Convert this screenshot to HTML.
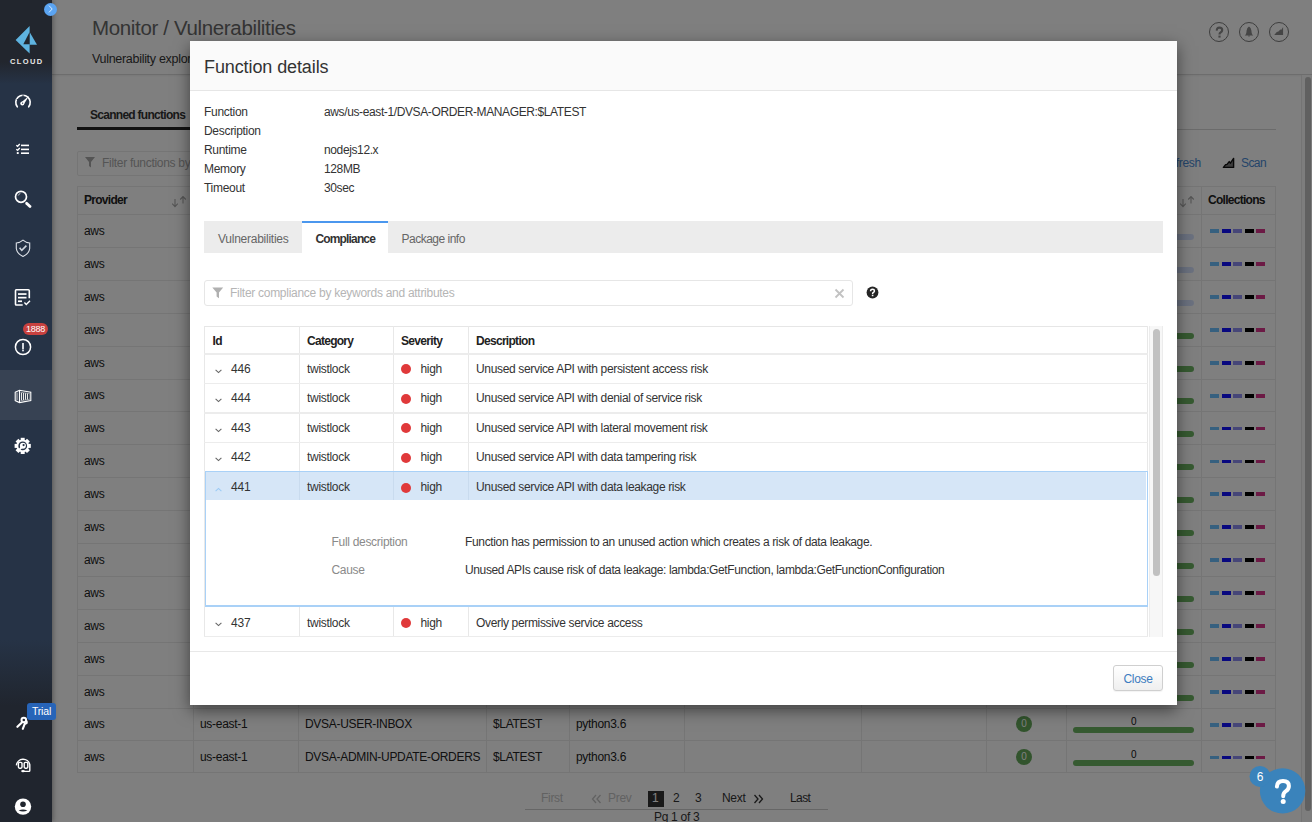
<!DOCTYPE html>
<html><head><meta charset="utf-8">
<style>
*{box-sizing:border-box}
html,body{margin:0;padding:0}
body{width:1312px;height:822px;overflow:hidden;position:relative;background:#fff;font-family:"Liberation Sans",sans-serif;color:#333;font-size:12px;letter-spacing:-0.3px}
.abs{position:absolute}
#sb{position:absolute;left:0;top:0;width:52px;height:822px;background:linear-gradient(180deg,#22262e 0px,#22262e 62px,#263346 84px,#263346 640px,#20252e 706px,#20252e 822px);z-index:5;box-shadow:1px 0 5px rgba(0,0,0,.35)}
.ic{position:absolute;left:14px;width:18px;height:18px}
#main{position:absolute;left:0;top:0;width:1312px;height:822px;background:#fff}
#ov{position:absolute;left:0;top:0;width:1312px;height:822px;background:rgba(0,0,0,.5);z-index:3}
#modal{position:absolute;left:190px;top:41px;width:986.5px;height:664px;background:#fff;z-index:10;box-shadow:0 5px 15px rgba(0,0,0,.5)}
.b{font-weight:bold;letter-spacing:-0.72px}
</style></head><body>
<div id="sb">
 <!-- expand button -->
 <div class="abs" style="left:44px;top:3px;width:13px;height:13px;border-radius:50%;background:#5ba4f2"></div>
 <svg class="abs" style="left:48px;top:5px" width="6" height="9" viewBox="0 0 6 9"><path d="M1 0.6 L4.2 4 L1 7.4" fill="none" stroke="#d6ecff" stroke-width="1"/></svg>
 <!-- logo -->
 <svg class="abs" style="left:14px;top:25px" width="26" height="30" viewBox="0 0 26 30">
  <path d="M15.6 1 L1.6 15 L15.6 28.5 Z" fill="#5eb3e0"/>
  <path d="M15.6 7 L23 19.8 L15.6 19.8 Z" fill="#5eb3e0"/>
  <path d="M15.6 7 L9.3 19.3 L15.6 19.3 Z" fill="#22262e"/>
 </svg>

 <!-- gauge -->
 <svg class="abs" style="left:10px;top:88px" width="26" height="26" viewBox="0 0 26 26">
  <path d="M7.3 18.8 A7.2 7.2 0 1 1 18.7 18.8" fill="none" stroke="#fff" stroke-width="1.6" stroke-linecap="round"/>
  <path d="M10.8 14.8 L18.9 8 L13.6 16.8 Z" fill="#fff"/>
  <circle cx="12.3" cy="15.6" r="2" fill="#fff"/><circle cx="12.6" cy="15.2" r="0.6" fill="#253245"/>
  <path d="M13 6.4 L13 8.2" stroke="#253245" stroke-width="0.9"/><path d="M6.6 11.2 L8.2 11.8" stroke="#253245" stroke-width="0.9"/>
 </svg>
 <!-- list -->
 <svg class="abs" style="left:10px;top:136px" width="26" height="26" viewBox="0 0 26 26">
  <path d="M6.3 9.3 L7.6 10.3 L9.8 8" fill="none" stroke="#fff" stroke-width="1.3"/>
  <path d="M6.3 13.3 L7.6 14.3 L9.8 12" fill="none" stroke="#fff" stroke-width="1.3"/>
  <rect x="6.8" y="16.1" width="1.9" height="1.9" fill="#fff"/>
  <rect x="11" y="8.6" width="8" height="1.6" fill="#fff"/>
  <rect x="11" y="12.6" width="8" height="1.6" fill="#fff"/>
  <rect x="11" y="16.4" width="8" height="1.6" fill="#fff"/>
 </svg>
 <!-- search -->
 <svg class="abs" style="left:10px;top:186px" width="26" height="26" viewBox="0 0 26 26">
  <circle cx="11" cy="10.8" r="5.5" fill="none" stroke="#fff" stroke-width="1.7"/>
  <path d="M16.6 17.2 L20 20.6" stroke="#fff" stroke-width="2.8" stroke-linecap="round"/>
  <path d="M8.2 9.6 A3.2 3.2 0 0 1 10.4 7.4" fill="none" stroke="#ddd" stroke-width="0.8"/>
 </svg>
 <!-- shield -->
 <svg class="abs" style="left:10px;top:235px" width="26" height="26" viewBox="0 0 26 26">
  <path d="M13 5.2 Q10 7.8 6.3 8 L6.3 13.5 Q7 18.6 13 21.4 Q19 18.6 19.7 13.5 L19.7 8 Q16 7.8 13 5.2 Z" fill="none" stroke="#e0e4ea" stroke-width="1.1"/>
  <path d="M9.6 12.8 L11.8 15.4 L16.4 10.6" fill="none" stroke="#d0d6de" stroke-width="1.6"/>
 </svg>
 <!-- document -->
 <svg class="abs" style="left:10px;top:284px" width="26" height="26" viewBox="0 0 26 26">
  <path d="M19.3 14.2 L19.3 6.8 Q19.3 5.8 18.3 5.8 L6.3 5.8 Q5.5 5.8 5.5 6.8 L5.5 20.2 Q5.5 21 6.3 21 L12.7 21" fill="none" stroke="#fff" stroke-width="1.6"/>
  <rect x="8" y="9.2" width="8.5" height="1.7" fill="#fff"/>
  <rect x="8" y="12.8" width="8.5" height="1.7" fill="#fff"/>
  <rect x="8" y="16.4" width="4" height="1.7" fill="#fff"/>
  <path d="M14.4 18.6 L16.3 20.6 L20 16.8" fill="none" stroke="#fff" stroke-width="1.4"/>
 </svg>
 <!-- badge 1888 -->
 <div class="abs" style="left:23px;top:323px;width:25px;height:12px;border-radius:6px;background:#c8413f;color:#fff;font-size:9px;line-height:12px;text-align:center;letter-spacing:-0.2px">1888</div>
 <!-- alert -->
 <svg class="abs" style="left:10px;top:334px" width="26" height="26" viewBox="0 0 26 26">
  <circle cx="13" cy="13" r="7.6" fill="none" stroke="#fff" stroke-width="1.5"/>
  <rect x="12.1" y="9" width="1.8" height="6.2" fill="#e6e9ee"/>
  <rect x="12.1" y="15.6" width="1.8" height="1.7" fill="#e6e9ee"/>
 </svg>
 <!-- active -->
 <div class="abs" style="left:0;top:370px;width:52px;height:50px;background:#374253"></div>
 <svg class="abs" style="left:10px;top:383px" width="26" height="26" viewBox="0 0 26 26">
  <path d="M5.2 9.3 L9.5 7.2 L20.8 9.3 L20.8 17.6 L9.5 19.6 L5.2 17.6 Z" fill="none" stroke="#fff" stroke-width="1.1"/>
  <path d="M9.5 7.2 L9.5 19.6" stroke="#fff" stroke-width="1.1"/>
  <path d="M7 9.6 L7 17" stroke="#ddd" stroke-width="0.9"/>
  <path d="M11.5 9.8 L11.5 17.2 M13.5 10 L13.5 17 M15.5 10.2 L15.5 16.8 M17.5 10.4 L17.5 16.6" stroke="#e8e8e8" stroke-width="1"/>
  <path d="M10.5 9.2 L20 10.8 L20 16.2 L10.5 17.8" fill="none" stroke="#ccc" stroke-width="0.6"/>
 </svg>
 <!-- gear -->
 <svg class="abs" style="left:10px;top:433px" width="26" height="26" viewBox="0 0 26 26">
  <g transform="translate(12.7 12.9)" fill="#fff">
   <circle r="6.3"/><rect x="-2" y="-8.1" width="4" height="3.4" transform="rotate(0)"/><rect x="-2" y="-8.1" width="4" height="3.4" transform="rotate(45)"/><rect x="-2" y="-8.1" width="4" height="3.4" transform="rotate(90)"/><rect x="-2" y="-8.1" width="4" height="3.4" transform="rotate(135)"/><rect x="-2" y="-8.1" width="4" height="3.4" transform="rotate(180)"/><rect x="-2" y="-8.1" width="4" height="3.4" transform="rotate(225)"/><rect x="-2" y="-8.1" width="4" height="3.4" transform="rotate(270)"/><rect x="-2" y="-8.1" width="4" height="3.4" transform="rotate(315)"/>
  </g>
  <circle cx="12.7" cy="12.9" r="4.4" fill="#253245"/>
  <circle cx="12.9" cy="12.7" r="3" fill="#fff"/>
  <circle cx="13.6" cy="12.1" r="1.1" fill="#253245"/>
  <path d="M12.2 13.6 L9.4 16.6" stroke="#fff" stroke-width="2"/>
 </svg>
 <!-- keys -->
 <svg class="abs" style="left:10px;top:710px" width="26" height="26" viewBox="0 0 26 26">
  <circle cx="13.8" cy="10" r="2.3" fill="none" stroke="#fff" stroke-width="2"/>
  <path d="M15.6 10.2 A2.6 2.6 0 0 1 16.6 13.4 L14.8 14" fill="none" stroke="#fff" stroke-width="1.8"/>
  <path d="M12.4 12 L7.4 16.8" stroke="#fff" stroke-width="2.2" stroke-linecap="round"/>
  <path d="M14.8 13.6 L12.8 18.8" stroke="#fff" stroke-width="2.1" stroke-linecap="round"/>
 </svg>
 <div class="abs" style="left:27px;top:703px;width:29px;height:17px;border-radius:3px;background:#2764b8;color:#fff;font-size:10.5px;line-height:17px;text-align:center;letter-spacing:-0.2px">Trial</div>
 <!-- headset -->
 <svg class="abs" style="left:10px;top:752px" width="26" height="26" viewBox="0 0 26 26">
  <path d="M6.4 13.4 A6.8 6.8 0 0 1 19.8 12.6 L19.8 18.6 Q19.8 19.4 19 19.4 L13 19.4" fill="none" stroke="#fff" stroke-width="1.4"/>
  <rect x="8.4" y="10.4" width="3.6" height="5.8" rx="1.1" fill="none" stroke="#fff" stroke-width="1.4"/>
  <rect x="14.2" y="10.4" width="3.6" height="5.8" rx="1.1" fill="none" stroke="#fff" stroke-width="1.4"/>
  <ellipse cx="13" cy="19.1" rx="1.8" ry="1.2" fill="#fff"/>
 </svg>
 <!-- user -->
 <svg class="abs" style="left:10px;top:794px" width="26" height="26" viewBox="0 0 26 26">
  <circle cx="13" cy="12.6" r="8.2" fill="#fff"/>
  <circle cx="13" cy="10.2" r="2.8" fill="#20252e"/>
  <path d="M8.6 16.4 Q13 14.4 17.4 16.4 Q13 18.4 8.6 16.4 Z" fill="#20252e"/>
 </svg>
 <div class="abs" style="left:10px;top:57px;width:34px;font-size:7.5px;font-weight:bold;color:#e8e8e8;letter-spacing:1.4px;line-height:9px">CLOUD</div>
</div>
<!--MAIN-->
<div id="main">
<div class="abs" style="left:52px;top:0;width:1260px;height:75px;border-bottom:1px solid #dadada;box-shadow:0 1px 2px rgba(0,0,0,.06)"></div>
<div class="abs" id="title" style="left:92px;top:14.5px;font-size:20.5px;line-height:26px;color:#686868;letter-spacing:-0.35px;white-space:nowrap">Monitor / Vulnerabilities</div>
<div class="abs" id="subtitle" style="left:92px;top:51px;font-size:12.5px;line-height:16px;color:#333;white-space:nowrap">Vulnerability explorer</div>
<div class="abs" style="left:1209px;top:22px;width:20px;height:20px;border-radius:50%;border:1px solid #7a7a7a"></div>
<div class="abs" style="left:1239px;top:22px;width:20px;height:20px;border-radius:50%;border:1px solid #7a7a7a"></div>
<div class="abs" style="left:1268.5px;top:22px;width:20px;height:20px;border-radius:50%;border:1px solid #7a7a7a"></div>
<svg class="abs" style="left:1209px;top:22px" width="80" height="20" viewBox="0 0 80 20">
 <path d="M7.9 8.6 Q7.6 5.6 10.4 5.6 Q13.2 5.6 13.2 8 Q13.2 9.6 11.6 10.4 Q10.5 11 10.5 12.6" fill="none" stroke="#8a8a8a" stroke-width="2.2"/>
 <rect x="9.4" y="13.6" width="2.2" height="2" fill="#8a8a8a"/>
 <path d="M35.8 13.4 Q37.2 12.2 37.4 10.4 L37.6 8.6 Q38 5.4 40 4.6 Q42 5.4 42.4 8.6 L42.6 10.4 Q42.8 12.2 44.2 13.4 Z" fill="#8a8a8a"/>
 <path d="M39 13.6 L41 13.6 L40 15 Z" fill="#8a8a8a"/>
 <path d="M65.2 13 L67.8 10 L69.4 9.4 L71.4 7.4 L72.4 7.8 L74.1 5 L74.1 13 Z" fill="#8a8a8a"/>
</svg>
<div class="abs b" style="left:90px;top:107px;font-size:12px;line-height:16px;color:#333;white-space:nowrap">Scanned functions</div>
<div class="abs" style="left:77px;top:129px;width:1199px;height:1px;background:#d6d6d6"></div>
<div class="abs" style="left:77px;top:127px;width:130px;height:3px;background:#222"></div>
<div class="abs" style="left:77px;top:151px;width:740px;height:25px;border:1px solid #ebebeb;border-radius:2px"></div>
<svg class="abs" style="left:85px;top:157px" width="10" height="11" viewBox="0 0 10 11"><path d="M0 0 L10 0 L6 5 L6 10.5 L4 9 L4 5 Z" fill="#a8a8a8"/></svg>
<div class="abs" style="left:102px;top:155px;font-size:12px;line-height:16px;color:#aaa;white-space:nowrap">Filter functions by keywords and attributes</div>
<div class="abs" style="left:1161px;top:155px;font-size:12px;line-height:16px;color:#4a8ad4;white-space:nowrap">Refresh</div>
<svg class="abs" style="left:1222px;top:157px" width="13" height="12" viewBox="0 0 13 12"><path d="M1.4 10.4 L3.6 7.6 L5 7.4 L7.2 4.6 L8.4 6.2 L11.6 1.4 L11.6 10.4 Z" fill="#7a7a7a" stroke="#111" stroke-width="1.4" stroke-linejoin="round"/></svg>
<div class="abs" style="left:1241px;top:155px;font-size:12px;line-height:16px;color:#4a8ad4;white-space:nowrap;letter-spacing:-0.6px">Scan</div>
<div class="abs" style="left:77px;top:186px;width:1199px;height:587.3px;border:1px solid #ebebeb"></div>
<div class="abs" style="left:193px;top:186px;width:1px;height:587.3px;background:#ebebeb"></div>
<div class="abs" style="left:298px;top:186px;width:1px;height:587.3px;background:#ebebeb"></div>
<div class="abs" style="left:486px;top:186px;width:1px;height:587.3px;background:#ebebeb"></div>
<div class="abs" style="left:569px;top:186px;width:1px;height:587.3px;background:#ebebeb"></div>
<div class="abs" style="left:684px;top:186px;width:1px;height:587.3px;background:#ebebeb"></div>
<div class="abs" style="left:861px;top:186px;width:1px;height:587.3px;background:#ebebeb"></div>
<div class="abs" style="left:986px;top:186px;width:1px;height:587.3px;background:#ebebeb"></div>
<div class="abs" style="left:1066px;top:186px;width:1px;height:587.3px;background:#ebebeb"></div>
<div class="abs" style="left:1201px;top:186px;width:1px;height:587.3px;background:#ebebeb"></div>
<div class="abs" style="left:77px;top:214.00px;width:1199px;height:1px;background:#ebebeb"></div>
<div class="abs" style="left:77px;top:246.90px;width:1199px;height:1px;background:#ebebeb"></div>
<div class="abs" style="left:77px;top:279.80px;width:1199px;height:1px;background:#ebebeb"></div>
<div class="abs" style="left:77px;top:312.70px;width:1199px;height:1px;background:#ebebeb"></div>
<div class="abs" style="left:77px;top:345.60px;width:1199px;height:1px;background:#ebebeb"></div>
<div class="abs" style="left:77px;top:378.50px;width:1199px;height:1px;background:#ebebeb"></div>
<div class="abs" style="left:77px;top:411.40px;width:1199px;height:1px;background:#ebebeb"></div>
<div class="abs" style="left:77px;top:444.30px;width:1199px;height:1px;background:#ebebeb"></div>
<div class="abs" style="left:77px;top:477.20px;width:1199px;height:1px;background:#ebebeb"></div>
<div class="abs" style="left:77px;top:510.10px;width:1199px;height:1px;background:#ebebeb"></div>
<div class="abs" style="left:77px;top:543.00px;width:1199px;height:1px;background:#ebebeb"></div>
<div class="abs" style="left:77px;top:575.90px;width:1199px;height:1px;background:#ebebeb"></div>
<div class="abs" style="left:77px;top:608.80px;width:1199px;height:1px;background:#ebebeb"></div>
<div class="abs" style="left:77px;top:641.70px;width:1199px;height:1px;background:#ebebeb"></div>
<div class="abs" style="left:77px;top:674.60px;width:1199px;height:1px;background:#ebebeb"></div>
<div class="abs" style="left:77px;top:707.50px;width:1199px;height:1px;background:#ebebeb"></div>
<div class="abs" style="left:77px;top:740.40px;width:1199px;height:1px;background:#ebebeb"></div>
<div class="abs b hd" style="left:84px;top:192px;font-size:12px;line-height:16px;color:#222;white-space:nowrap">Provider</div>
<svg class="abs" style="left:171px;top:195.5px" width="16" height="12" viewBox="0 0 16 12"><path d="M4 3 L4 10.5 M1.2 7.6 L4 10.6 L6.8 7.6" fill="none" stroke="#aaa" stroke-width="1.1"/><path d="M12 0.6 L12 7.5 M9.2 3.5 L12 0.5 L14.8 3.5" fill="none" stroke="#aaa" stroke-width="1.1"/></svg>
<div class="abs b hd" style="left:200px;top:192px;font-size:12px;line-height:16px;color:#222;white-space:nowrap">Region</div>
<svg class="abs" style="left:276px;top:195.5px" width="16" height="12" viewBox="0 0 16 12"><path d="M4 3 L4 10.5 M1.2 7.6 L4 10.6 L6.8 7.6" fill="none" stroke="#aaa" stroke-width="1.1"/><path d="M12 0.6 L12 7.5 M9.2 3.5 L12 0.5 L14.8 3.5" fill="none" stroke="#aaa" stroke-width="1.1"/></svg>
<div class="abs b hd" style="left:305px;top:192px;font-size:12px;line-height:16px;color:#222;white-space:nowrap">Function name</div>
<svg class="abs" style="left:464px;top:195.5px" width="16" height="12" viewBox="0 0 16 12"><path d="M4 3 L4 10.5 M1.2 7.6 L4 10.6 L6.8 7.6" fill="none" stroke="#aaa" stroke-width="1.1"/><path d="M12 0.6 L12 7.5 M9.2 3.5 L12 0.5 L14.8 3.5" fill="none" stroke="#aaa" stroke-width="1.1"/></svg>
<div class="abs b hd" style="left:493px;top:192px;font-size:12px;line-height:16px;color:#222;white-space:nowrap">Version</div>
<svg class="abs" style="left:547px;top:195.5px" width="16" height="12" viewBox="0 0 16 12"><path d="M4 3 L4 10.5 M1.2 7.6 L4 10.6 L6.8 7.6" fill="none" stroke="#aaa" stroke-width="1.1"/><path d="M12 0.6 L12 7.5 M9.2 3.5 L12 0.5 L14.8 3.5" fill="none" stroke="#aaa" stroke-width="1.1"/></svg>
<div class="abs b hd" style="left:576px;top:192px;font-size:12px;line-height:16px;color:#222;white-space:nowrap">Runtime</div>
<svg class="abs" style="left:662px;top:195.5px" width="16" height="12" viewBox="0 0 16 12"><path d="M4 3 L4 10.5 M1.2 7.6 L4 10.6 L6.8 7.6" fill="none" stroke="#aaa" stroke-width="1.1"/><path d="M12 0.6 L12 7.5 M9.2 3.5 L12 0.5 L14.8 3.5" fill="none" stroke="#aaa" stroke-width="1.1"/></svg>
<div class="abs b hd" style="left:691px;top:192px;font-size:12px;line-height:16px;color:#222;white-space:nowrap">Description</div>
<svg class="abs" style="left:839px;top:195.5px" width="16" height="12" viewBox="0 0 16 12"><path d="M4 3 L4 10.5 M1.2 7.6 L4 10.6 L6.8 7.6" fill="none" stroke="#aaa" stroke-width="1.1"/><path d="M12 0.6 L12 7.5 M9.2 3.5 L12 0.5 L14.8 3.5" fill="none" stroke="#aaa" stroke-width="1.1"/></svg>
<div class="abs b hd" style="left:868px;top:192px;font-size:12px;line-height:16px;color:#222;white-space:nowrap">Last modified</div>
<svg class="abs" style="left:964px;top:195.5px" width="16" height="12" viewBox="0 0 16 12"><path d="M4 3 L4 10.5 M1.2 7.6 L4 10.6 L6.8 7.6" fill="none" stroke="#aaa" stroke-width="1.1"/><path d="M12 0.6 L12 7.5 M9.2 3.5 L12 0.5 L14.8 3.5" fill="none" stroke="#aaa" stroke-width="1.1"/></svg>
<div class="abs b hd" style="left:993px;top:192px;font-size:12px;line-height:16px;color:#222;white-space:nowrap">Vulnerabilities</div>
<svg class="abs" style="left:1044px;top:195.5px" width="16" height="12" viewBox="0 0 16 12"><path d="M4 3 L4 10.5 M1.2 7.6 L4 10.6 L6.8 7.6" fill="none" stroke="#aaa" stroke-width="1.1"/><path d="M12 0.6 L12 7.5 M9.2 3.5 L12 0.5 L14.8 3.5" fill="none" stroke="#aaa" stroke-width="1.1"/></svg>
<div class="abs b hd" style="left:1073px;top:192px;font-size:12px;line-height:16px;color:#222;white-space:nowrap">Compliance</div>
<svg class="abs" style="left:1179px;top:195.5px" width="16" height="12" viewBox="0 0 16 12"><path d="M4 3 L4 10.5 M1.2 7.6 L4 10.6 L6.8 7.6" fill="none" stroke="#aaa" stroke-width="1.1"/><path d="M12 0.6 L12 7.5 M9.2 3.5 L12 0.5 L14.8 3.5" fill="none" stroke="#aaa" stroke-width="1.1"/></svg>
<div class="abs b hd" style="left:1208px;top:192px;font-size:12px;line-height:16px;color:#222;white-space:nowrap">Collections</div>
<div class="abs" style="left:84px;top:222.95px;font-size:12px;line-height:16px;color:#222;white-space:nowrap">aws</div>
<div class="abs" style="left:200px;top:222.95px;font-size:12px;line-height:16px;color:#222;white-space:nowrap">us-east-1</div>
<div class="abs" style="left:305px;top:222.95px;font-size:12px;line-height:16px;color:#222;white-space:nowrap">DVSA-ORDER-MANAGER</div>
<div class="abs" style="left:493px;top:222.95px;font-size:12px;line-height:16px;color:#222;white-space:nowrap">$LATEST</div>
<div class="abs" style="left:576px;top:222.95px;font-size:12px;line-height:16px;color:#222;white-space:nowrap">python3.6</div>
<div class="abs" style="left:1016px;top:222.45px;width:16px;height:16px;border-radius:50%;background:#64a85a;color:#fff;font-size:10px;line-height:16px;text-align:center">0</div>
<div class="abs" style="left:1073px;top:233.95px;width:121px;height:6px;border-radius:3px;background:linear-gradient(90deg,#e2e2e2,#e6e8ec 55%,#c4d4f4 70%,#d8e4ff)"></div>
<div class="abs" style="left:1131px;top:222.45px;font-size:10px;line-height:12px;color:#111">0</div>
<div class="abs" style="left:1210.2px;top:229.25px;width:8.5px;height:3.8px;background:#6cc0ff"></div>
<div class="abs" style="left:1222.1px;top:229.25px;width:8.5px;height:3.8px;background:#1010ff"></div>
<div class="abs" style="left:1233.2px;top:229.25px;width:8.5px;height:3.8px;background:#8c8cf0"></div>
<div class="abs" style="left:1245px;top:229.25px;width:8.5px;height:3.8px;background:#000"></div>
<div class="abs" style="left:1256.3px;top:229.25px;width:8.5px;height:3.8px;background:#d8348a"></div>
<div class="abs" style="left:84px;top:255.85px;font-size:12px;line-height:16px;color:#222;white-space:nowrap">aws</div>
<div class="abs" style="left:200px;top:255.85px;font-size:12px;line-height:16px;color:#222;white-space:nowrap">us-east-1</div>
<div class="abs" style="left:305px;top:255.85px;font-size:12px;line-height:16px;color:#222;white-space:nowrap">DVSA-ORDER-NEW</div>
<div class="abs" style="left:493px;top:255.85px;font-size:12px;line-height:16px;color:#222;white-space:nowrap">$LATEST</div>
<div class="abs" style="left:576px;top:255.85px;font-size:12px;line-height:16px;color:#222;white-space:nowrap">python3.6</div>
<div class="abs" style="left:1016px;top:255.35px;width:16px;height:16px;border-radius:50%;background:#64a85a;color:#fff;font-size:10px;line-height:16px;text-align:center">0</div>
<div class="abs" style="left:1073px;top:266.85px;width:121px;height:6px;border-radius:3px;background:linear-gradient(90deg,#e2e2e2,#e6e8ec 55%,#c4d4f4 70%,#d8e4ff)"></div>
<div class="abs" style="left:1131px;top:255.35px;font-size:10px;line-height:12px;color:#111">0</div>
<div class="abs" style="left:1210.2px;top:262.15px;width:8.5px;height:3.8px;background:#6cc0ff"></div>
<div class="abs" style="left:1222.1px;top:262.15px;width:8.5px;height:3.8px;background:#1010ff"></div>
<div class="abs" style="left:1233.2px;top:262.15px;width:8.5px;height:3.8px;background:#8c8cf0"></div>
<div class="abs" style="left:1245px;top:262.15px;width:8.5px;height:3.8px;background:#000"></div>
<div class="abs" style="left:1256.3px;top:262.15px;width:8.5px;height:3.8px;background:#d8348a"></div>
<div class="abs" style="left:84px;top:288.75px;font-size:12px;line-height:16px;color:#222;white-space:nowrap">aws</div>
<div class="abs" style="left:200px;top:288.75px;font-size:12px;line-height:16px;color:#222;white-space:nowrap">us-east-1</div>
<div class="abs" style="left:305px;top:288.75px;font-size:12px;line-height:16px;color:#222;white-space:nowrap">DVSA-ORDER-CANCEL</div>
<div class="abs" style="left:493px;top:288.75px;font-size:12px;line-height:16px;color:#222;white-space:nowrap">$LATEST</div>
<div class="abs" style="left:576px;top:288.75px;font-size:12px;line-height:16px;color:#222;white-space:nowrap">python3.6</div>
<div class="abs" style="left:1016px;top:288.25px;width:16px;height:16px;border-radius:50%;background:#64a85a;color:#fff;font-size:10px;line-height:16px;text-align:center">0</div>
<div class="abs" style="left:1073px;top:299.75px;width:121px;height:6px;border-radius:3px;background:linear-gradient(90deg,#e2e2e2,#e6e8ec 55%,#c4d4f4 70%,#d8e4ff)"></div>
<div class="abs" style="left:1131px;top:288.25px;font-size:10px;line-height:12px;color:#111">0</div>
<div class="abs" style="left:1210.2px;top:295.05px;width:8.5px;height:3.8px;background:#6cc0ff"></div>
<div class="abs" style="left:1222.1px;top:295.05px;width:8.5px;height:3.8px;background:#1010ff"></div>
<div class="abs" style="left:1233.2px;top:295.05px;width:8.5px;height:3.8px;background:#8c8cf0"></div>
<div class="abs" style="left:1245px;top:295.05px;width:8.5px;height:3.8px;background:#000"></div>
<div class="abs" style="left:1256.3px;top:295.05px;width:8.5px;height:3.8px;background:#d8348a"></div>
<div class="abs" style="left:84px;top:321.65px;font-size:12px;line-height:16px;color:#222;white-space:nowrap">aws</div>
<div class="abs" style="left:200px;top:321.65px;font-size:12px;line-height:16px;color:#222;white-space:nowrap">us-east-1</div>
<div class="abs" style="left:305px;top:321.65px;font-size:12px;line-height:16px;color:#222;white-space:nowrap">DVSA-ORDER-GET</div>
<div class="abs" style="left:493px;top:321.65px;font-size:12px;line-height:16px;color:#222;white-space:nowrap">$LATEST</div>
<div class="abs" style="left:576px;top:321.65px;font-size:12px;line-height:16px;color:#222;white-space:nowrap">python3.6</div>
<div class="abs" style="left:1016px;top:321.15px;width:16px;height:16px;border-radius:50%;background:#64a85a;color:#fff;font-size:10px;line-height:16px;text-align:center">0</div>
<div class="abs" style="left:1073px;top:332.65px;width:121px;height:6px;border-radius:3px;background:#6cb462"></div>
<div class="abs" style="left:1131px;top:321.15px;font-size:10px;line-height:12px;color:#111">0</div>
<div class="abs" style="left:1210.2px;top:327.95px;width:8.5px;height:3.8px;background:#6cc0ff"></div>
<div class="abs" style="left:1222.1px;top:327.95px;width:8.5px;height:3.8px;background:#1010ff"></div>
<div class="abs" style="left:1233.2px;top:327.95px;width:8.5px;height:3.8px;background:#8c8cf0"></div>
<div class="abs" style="left:1245px;top:327.95px;width:8.5px;height:3.8px;background:#000"></div>
<div class="abs" style="left:1256.3px;top:327.95px;width:8.5px;height:3.8px;background:#d8348a"></div>
<div class="abs" style="left:84px;top:354.55px;font-size:12px;line-height:16px;color:#222;white-space:nowrap">aws</div>
<div class="abs" style="left:200px;top:354.55px;font-size:12px;line-height:16px;color:#222;white-space:nowrap">us-east-1</div>
<div class="abs" style="left:305px;top:354.55px;font-size:12px;line-height:16px;color:#222;white-space:nowrap">DVSA-ORDER-ORDERS</div>
<div class="abs" style="left:493px;top:354.55px;font-size:12px;line-height:16px;color:#222;white-space:nowrap">$LATEST</div>
<div class="abs" style="left:576px;top:354.55px;font-size:12px;line-height:16px;color:#222;white-space:nowrap">python3.6</div>
<div class="abs" style="left:1016px;top:354.05px;width:16px;height:16px;border-radius:50%;background:#64a85a;color:#fff;font-size:10px;line-height:16px;text-align:center">0</div>
<div class="abs" style="left:1073px;top:365.55px;width:121px;height:6px;border-radius:3px;background:#6cb462"></div>
<div class="abs" style="left:1131px;top:354.05px;font-size:10px;line-height:12px;color:#111">0</div>
<div class="abs" style="left:1210.2px;top:360.85px;width:8.5px;height:3.8px;background:#6cc0ff"></div>
<div class="abs" style="left:1222.1px;top:360.85px;width:8.5px;height:3.8px;background:#1010ff"></div>
<div class="abs" style="left:1233.2px;top:360.85px;width:8.5px;height:3.8px;background:#8c8cf0"></div>
<div class="abs" style="left:1245px;top:360.85px;width:8.5px;height:3.8px;background:#000"></div>
<div class="abs" style="left:1256.3px;top:360.85px;width:8.5px;height:3.8px;background:#d8348a"></div>
<div class="abs" style="left:84px;top:387.45px;font-size:12px;line-height:16px;color:#222;white-space:nowrap">aws</div>
<div class="abs" style="left:200px;top:387.45px;font-size:12px;line-height:16px;color:#222;white-space:nowrap">us-east-1</div>
<div class="abs" style="left:305px;top:387.45px;font-size:12px;line-height:16px;color:#222;white-space:nowrap">DVSA-ORDER-SHIPPING</div>
<div class="abs" style="left:493px;top:387.45px;font-size:12px;line-height:16px;color:#222;white-space:nowrap">$LATEST</div>
<div class="abs" style="left:576px;top:387.45px;font-size:12px;line-height:16px;color:#222;white-space:nowrap">python3.6</div>
<div class="abs" style="left:1016px;top:386.95px;width:16px;height:16px;border-radius:50%;background:#64a85a;color:#fff;font-size:10px;line-height:16px;text-align:center">0</div>
<div class="abs" style="left:1073px;top:398.45px;width:121px;height:6px;border-radius:3px;background:#6cb462"></div>
<div class="abs" style="left:1131px;top:386.95px;font-size:10px;line-height:12px;color:#111">0</div>
<div class="abs" style="left:1210.2px;top:393.75px;width:8.5px;height:3.8px;background:#6cc0ff"></div>
<div class="abs" style="left:1222.1px;top:393.75px;width:8.5px;height:3.8px;background:#1010ff"></div>
<div class="abs" style="left:1233.2px;top:393.75px;width:8.5px;height:3.8px;background:#8c8cf0"></div>
<div class="abs" style="left:1245px;top:393.75px;width:8.5px;height:3.8px;background:#000"></div>
<div class="abs" style="left:1256.3px;top:393.75px;width:8.5px;height:3.8px;background:#d8348a"></div>
<div class="abs" style="left:84px;top:420.35px;font-size:12px;line-height:16px;color:#222;white-space:nowrap">aws</div>
<div class="abs" style="left:200px;top:420.35px;font-size:12px;line-height:16px;color:#222;white-space:nowrap">us-east-1</div>
<div class="abs" style="left:305px;top:420.35px;font-size:12px;line-height:16px;color:#222;white-space:nowrap">DVSA-ORDER-UPDATE</div>
<div class="abs" style="left:493px;top:420.35px;font-size:12px;line-height:16px;color:#222;white-space:nowrap">$LATEST</div>
<div class="abs" style="left:576px;top:420.35px;font-size:12px;line-height:16px;color:#222;white-space:nowrap">python3.6</div>
<div class="abs" style="left:1016px;top:419.85px;width:16px;height:16px;border-radius:50%;background:#64a85a;color:#fff;font-size:10px;line-height:16px;text-align:center">0</div>
<div class="abs" style="left:1073px;top:431.35px;width:121px;height:6px;border-radius:3px;background:#6cb462"></div>
<div class="abs" style="left:1131px;top:419.85px;font-size:10px;line-height:12px;color:#111">0</div>
<div class="abs" style="left:1210.2px;top:426.65px;width:8.5px;height:3.8px;background:#6cc0ff"></div>
<div class="abs" style="left:1222.1px;top:426.65px;width:8.5px;height:3.8px;background:#1010ff"></div>
<div class="abs" style="left:1233.2px;top:426.65px;width:8.5px;height:3.8px;background:#8c8cf0"></div>
<div class="abs" style="left:1245px;top:426.65px;width:8.5px;height:3.8px;background:#000"></div>
<div class="abs" style="left:1256.3px;top:426.65px;width:8.5px;height:3.8px;background:#d8348a"></div>
<div class="abs" style="left:84px;top:453.25px;font-size:12px;line-height:16px;color:#222;white-space:nowrap">aws</div>
<div class="abs" style="left:200px;top:453.25px;font-size:12px;line-height:16px;color:#222;white-space:nowrap">us-east-1</div>
<div class="abs" style="left:305px;top:453.25px;font-size:12px;line-height:16px;color:#222;white-space:nowrap">DVSA-ORDER-BILLING</div>
<div class="abs" style="left:493px;top:453.25px;font-size:12px;line-height:16px;color:#222;white-space:nowrap">$LATEST</div>
<div class="abs" style="left:576px;top:453.25px;font-size:12px;line-height:16px;color:#222;white-space:nowrap">python3.6</div>
<div class="abs" style="left:1016px;top:452.75px;width:16px;height:16px;border-radius:50%;background:#64a85a;color:#fff;font-size:10px;line-height:16px;text-align:center">0</div>
<div class="abs" style="left:1073px;top:464.25px;width:121px;height:6px;border-radius:3px;background:#6cb462"></div>
<div class="abs" style="left:1131px;top:452.75px;font-size:10px;line-height:12px;color:#111">0</div>
<div class="abs" style="left:1210.2px;top:459.55px;width:8.5px;height:3.8px;background:#6cc0ff"></div>
<div class="abs" style="left:1222.1px;top:459.55px;width:8.5px;height:3.8px;background:#1010ff"></div>
<div class="abs" style="left:1233.2px;top:459.55px;width:8.5px;height:3.8px;background:#8c8cf0"></div>
<div class="abs" style="left:1245px;top:459.55px;width:8.5px;height:3.8px;background:#000"></div>
<div class="abs" style="left:1256.3px;top:459.55px;width:8.5px;height:3.8px;background:#d8348a"></div>
<div class="abs" style="left:84px;top:486.15px;font-size:12px;line-height:16px;color:#222;white-space:nowrap">aws</div>
<div class="abs" style="left:200px;top:486.15px;font-size:12px;line-height:16px;color:#222;white-space:nowrap">us-east-1</div>
<div class="abs" style="left:305px;top:486.15px;font-size:12px;line-height:16px;color:#222;white-space:nowrap">DVSA-PAYMENT-PROCESSOR</div>
<div class="abs" style="left:493px;top:486.15px;font-size:12px;line-height:16px;color:#222;white-space:nowrap">$LATEST</div>
<div class="abs" style="left:576px;top:486.15px;font-size:12px;line-height:16px;color:#222;white-space:nowrap">python3.6</div>
<div class="abs" style="left:1016px;top:485.65px;width:16px;height:16px;border-radius:50%;background:#64a85a;color:#fff;font-size:10px;line-height:16px;text-align:center">0</div>
<div class="abs" style="left:1073px;top:497.15px;width:121px;height:6px;border-radius:3px;background:#6cb462"></div>
<div class="abs" style="left:1131px;top:485.65px;font-size:10px;line-height:12px;color:#111">0</div>
<div class="abs" style="left:1210.2px;top:492.45px;width:8.5px;height:3.8px;background:#6cc0ff"></div>
<div class="abs" style="left:1222.1px;top:492.45px;width:8.5px;height:3.8px;background:#1010ff"></div>
<div class="abs" style="left:1233.2px;top:492.45px;width:8.5px;height:3.8px;background:#8c8cf0"></div>
<div class="abs" style="left:1245px;top:492.45px;width:8.5px;height:3.8px;background:#000"></div>
<div class="abs" style="left:1256.3px;top:492.45px;width:8.5px;height:3.8px;background:#d8348a"></div>
<div class="abs" style="left:84px;top:519.05px;font-size:12px;line-height:16px;color:#222;white-space:nowrap">aws</div>
<div class="abs" style="left:200px;top:519.05px;font-size:12px;line-height:16px;color:#222;white-space:nowrap">us-east-1</div>
<div class="abs" style="left:305px;top:519.05px;font-size:12px;line-height:16px;color:#222;white-space:nowrap">DVSA-CREATE-RECEIPT</div>
<div class="abs" style="left:493px;top:519.05px;font-size:12px;line-height:16px;color:#222;white-space:nowrap">$LATEST</div>
<div class="abs" style="left:576px;top:519.05px;font-size:12px;line-height:16px;color:#222;white-space:nowrap">python3.6</div>
<div class="abs" style="left:1016px;top:518.55px;width:16px;height:16px;border-radius:50%;background:#64a85a;color:#fff;font-size:10px;line-height:16px;text-align:center">0</div>
<div class="abs" style="left:1073px;top:530.05px;width:121px;height:6px;border-radius:3px;background:#6cb462"></div>
<div class="abs" style="left:1131px;top:518.55px;font-size:10px;line-height:12px;color:#111">0</div>
<div class="abs" style="left:1210.2px;top:525.35px;width:8.5px;height:3.8px;background:#6cc0ff"></div>
<div class="abs" style="left:1222.1px;top:525.35px;width:8.5px;height:3.8px;background:#1010ff"></div>
<div class="abs" style="left:1233.2px;top:525.35px;width:8.5px;height:3.8px;background:#8c8cf0"></div>
<div class="abs" style="left:1245px;top:525.35px;width:8.5px;height:3.8px;background:#000"></div>
<div class="abs" style="left:1256.3px;top:525.35px;width:8.5px;height:3.8px;background:#d8348a"></div>
<div class="abs" style="left:84px;top:551.95px;font-size:12px;line-height:16px;color:#222;white-space:nowrap">aws</div>
<div class="abs" style="left:200px;top:551.95px;font-size:12px;line-height:16px;color:#222;white-space:nowrap">us-east-1</div>
<div class="abs" style="left:305px;top:551.95px;font-size:12px;line-height:16px;color:#222;white-space:nowrap">DVSA-SEND-RECEIPT-EMAIL</div>
<div class="abs" style="left:493px;top:551.95px;font-size:12px;line-height:16px;color:#222;white-space:nowrap">$LATEST</div>
<div class="abs" style="left:576px;top:551.95px;font-size:12px;line-height:16px;color:#222;white-space:nowrap">python3.6</div>
<div class="abs" style="left:1016px;top:551.45px;width:16px;height:16px;border-radius:50%;background:#64a85a;color:#fff;font-size:10px;line-height:16px;text-align:center">0</div>
<div class="abs" style="left:1073px;top:562.95px;width:121px;height:6px;border-radius:3px;background:#6cb462"></div>
<div class="abs" style="left:1131px;top:551.45px;font-size:10px;line-height:12px;color:#111">0</div>
<div class="abs" style="left:1210.2px;top:558.25px;width:8.5px;height:3.8px;background:#6cc0ff"></div>
<div class="abs" style="left:1222.1px;top:558.25px;width:8.5px;height:3.8px;background:#1010ff"></div>
<div class="abs" style="left:1233.2px;top:558.25px;width:8.5px;height:3.8px;background:#8c8cf0"></div>
<div class="abs" style="left:1245px;top:558.25px;width:8.5px;height:3.8px;background:#000"></div>
<div class="abs" style="left:1256.3px;top:558.25px;width:8.5px;height:3.8px;background:#d8348a"></div>
<div class="abs" style="left:84px;top:584.85px;font-size:12px;line-height:16px;color:#222;white-space:nowrap">aws</div>
<div class="abs" style="left:200px;top:584.85px;font-size:12px;line-height:16px;color:#222;white-space:nowrap">us-east-1</div>
<div class="abs" style="left:305px;top:584.85px;font-size:12px;line-height:16px;color:#222;white-space:nowrap">DVSA-FEEDBACK-UPLOADS</div>
<div class="abs" style="left:493px;top:584.85px;font-size:12px;line-height:16px;color:#222;white-space:nowrap">$LATEST</div>
<div class="abs" style="left:576px;top:584.85px;font-size:12px;line-height:16px;color:#222;white-space:nowrap">python3.6</div>
<div class="abs" style="left:1016px;top:584.35px;width:16px;height:16px;border-radius:50%;background:#64a85a;color:#fff;font-size:10px;line-height:16px;text-align:center">0</div>
<div class="abs" style="left:1073px;top:595.85px;width:121px;height:6px;border-radius:3px;background:#6cb462"></div>
<div class="abs" style="left:1131px;top:584.35px;font-size:10px;line-height:12px;color:#111">0</div>
<div class="abs" style="left:1210.2px;top:591.15px;width:8.5px;height:3.8px;background:#6cc0ff"></div>
<div class="abs" style="left:1222.1px;top:591.15px;width:8.5px;height:3.8px;background:#1010ff"></div>
<div class="abs" style="left:1233.2px;top:591.15px;width:8.5px;height:3.8px;background:#8c8cf0"></div>
<div class="abs" style="left:1245px;top:591.15px;width:8.5px;height:3.8px;background:#000"></div>
<div class="abs" style="left:1256.3px;top:591.15px;width:8.5px;height:3.8px;background:#d8348a"></div>
<div class="abs" style="left:84px;top:617.75px;font-size:12px;line-height:16px;color:#222;white-space:nowrap">aws</div>
<div class="abs" style="left:200px;top:617.75px;font-size:12px;line-height:16px;color:#222;white-space:nowrap">us-east-1</div>
<div class="abs" style="left:305px;top:617.75px;font-size:12px;line-height:16px;color:#222;white-space:nowrap">DVSA-ADMIN-GET-ORDERS</div>
<div class="abs" style="left:493px;top:617.75px;font-size:12px;line-height:16px;color:#222;white-space:nowrap">$LATEST</div>
<div class="abs" style="left:576px;top:617.75px;font-size:12px;line-height:16px;color:#222;white-space:nowrap">python3.6</div>
<div class="abs" style="left:1016px;top:617.25px;width:16px;height:16px;border-radius:50%;background:#64a85a;color:#fff;font-size:10px;line-height:16px;text-align:center">0</div>
<div class="abs" style="left:1073px;top:628.75px;width:121px;height:6px;border-radius:3px;background:#6cb462"></div>
<div class="abs" style="left:1131px;top:617.25px;font-size:10px;line-height:12px;color:#111">0</div>
<div class="abs" style="left:1210.2px;top:624.05px;width:8.5px;height:3.8px;background:#6cc0ff"></div>
<div class="abs" style="left:1222.1px;top:624.05px;width:8.5px;height:3.8px;background:#1010ff"></div>
<div class="abs" style="left:1233.2px;top:624.05px;width:8.5px;height:3.8px;background:#8c8cf0"></div>
<div class="abs" style="left:1245px;top:624.05px;width:8.5px;height:3.8px;background:#000"></div>
<div class="abs" style="left:1256.3px;top:624.05px;width:8.5px;height:3.8px;background:#d8348a"></div>
<div class="abs" style="left:84px;top:650.65px;font-size:12px;line-height:16px;color:#222;white-space:nowrap">aws</div>
<div class="abs" style="left:200px;top:650.65px;font-size:12px;line-height:16px;color:#222;white-space:nowrap">us-east-1</div>
<div class="abs" style="left:305px;top:650.65px;font-size:12px;line-height:16px;color:#222;white-space:nowrap">DVSA-ADMIN-GET-RECEIPT</div>
<div class="abs" style="left:493px;top:650.65px;font-size:12px;line-height:16px;color:#222;white-space:nowrap">$LATEST</div>
<div class="abs" style="left:576px;top:650.65px;font-size:12px;line-height:16px;color:#222;white-space:nowrap">python3.6</div>
<div class="abs" style="left:1016px;top:650.15px;width:16px;height:16px;border-radius:50%;background:#64a85a;color:#fff;font-size:10px;line-height:16px;text-align:center">0</div>
<div class="abs" style="left:1073px;top:661.65px;width:121px;height:6px;border-radius:3px;background:#6cb462"></div>
<div class="abs" style="left:1131px;top:650.15px;font-size:10px;line-height:12px;color:#111">0</div>
<div class="abs" style="left:1210.2px;top:656.95px;width:8.5px;height:3.8px;background:#6cc0ff"></div>
<div class="abs" style="left:1222.1px;top:656.95px;width:8.5px;height:3.8px;background:#1010ff"></div>
<div class="abs" style="left:1233.2px;top:656.95px;width:8.5px;height:3.8px;background:#8c8cf0"></div>
<div class="abs" style="left:1245px;top:656.95px;width:8.5px;height:3.8px;background:#000"></div>
<div class="abs" style="left:1256.3px;top:656.95px;width:8.5px;height:3.8px;background:#d8348a"></div>
<div class="abs" style="left:84px;top:683.55px;font-size:12px;line-height:16px;color:#222;white-space:nowrap">aws</div>
<div class="abs" style="left:200px;top:683.55px;font-size:12px;line-height:16px;color:#222;white-space:nowrap">us-east-1</div>
<div class="abs" style="left:305px;top:683.55px;font-size:12px;line-height:16px;color:#222;white-space:nowrap">DVSA-ADMIN-UPDATE-INBOX</div>
<div class="abs" style="left:493px;top:683.55px;font-size:12px;line-height:16px;color:#222;white-space:nowrap">$LATEST</div>
<div class="abs" style="left:576px;top:683.55px;font-size:12px;line-height:16px;color:#222;white-space:nowrap">python3.6</div>
<div class="abs" style="left:1016px;top:683.05px;width:16px;height:16px;border-radius:50%;background:#64a85a;color:#fff;font-size:10px;line-height:16px;text-align:center">0</div>
<div class="abs" style="left:1073px;top:694.55px;width:121px;height:6px;border-radius:3px;background:#6cb462"></div>
<div class="abs" style="left:1131px;top:683.05px;font-size:10px;line-height:12px;color:#111">0</div>
<div class="abs" style="left:1210.2px;top:689.85px;width:8.5px;height:3.8px;background:#6cc0ff"></div>
<div class="abs" style="left:1222.1px;top:689.85px;width:8.5px;height:3.8px;background:#1010ff"></div>
<div class="abs" style="left:1233.2px;top:689.85px;width:8.5px;height:3.8px;background:#8c8cf0"></div>
<div class="abs" style="left:1245px;top:689.85px;width:8.5px;height:3.8px;background:#000"></div>
<div class="abs" style="left:1256.3px;top:689.85px;width:8.5px;height:3.8px;background:#d8348a"></div>
<div class="abs" style="left:84px;top:716.45px;font-size:12px;line-height:16px;color:#222;white-space:nowrap">aws</div>
<div class="abs" style="left:200px;top:716.45px;font-size:12px;line-height:16px;color:#222;white-space:nowrap">us-east-1</div>
<div class="abs" style="left:305px;top:716.45px;font-size:12px;line-height:16px;color:#222;white-space:nowrap">DVSA-USER-INBOX</div>
<div class="abs" style="left:493px;top:716.45px;font-size:12px;line-height:16px;color:#222;white-space:nowrap">$LATEST</div>
<div class="abs" style="left:576px;top:716.45px;font-size:12px;line-height:16px;color:#222;white-space:nowrap">python3.6</div>
<div class="abs" style="left:1016px;top:715.95px;width:16px;height:16px;border-radius:50%;background:#64a85a;color:#fff;font-size:10px;line-height:16px;text-align:center">0</div>
<div class="abs" style="left:1073px;top:727.45px;width:121px;height:6px;border-radius:3px;background:#6cb462"></div>
<div class="abs" style="left:1131px;top:715.95px;font-size:10px;line-height:12px;color:#111">0</div>
<div class="abs" style="left:1210.2px;top:722.75px;width:8.5px;height:3.8px;background:#6cc0ff"></div>
<div class="abs" style="left:1222.1px;top:722.75px;width:8.5px;height:3.8px;background:#1010ff"></div>
<div class="abs" style="left:1233.2px;top:722.75px;width:8.5px;height:3.8px;background:#8c8cf0"></div>
<div class="abs" style="left:1245px;top:722.75px;width:8.5px;height:3.8px;background:#000"></div>
<div class="abs" style="left:1256.3px;top:722.75px;width:8.5px;height:3.8px;background:#d8348a"></div>
<div class="abs" style="left:84px;top:749.35px;font-size:12px;line-height:16px;color:#222;white-space:nowrap">aws</div>
<div class="abs" style="left:200px;top:749.35px;font-size:12px;line-height:16px;color:#222;white-space:nowrap">us-east-1</div>
<div class="abs" style="left:305px;top:749.35px;font-size:12px;line-height:16px;color:#222;white-space:nowrap">DVSA-ADMIN-UPDATE-ORDERS</div>
<div class="abs" style="left:493px;top:749.35px;font-size:12px;line-height:16px;color:#222;white-space:nowrap">$LATEST</div>
<div class="abs" style="left:576px;top:749.35px;font-size:12px;line-height:16px;color:#222;white-space:nowrap">python3.6</div>
<div class="abs" style="left:1016px;top:748.85px;width:16px;height:16px;border-radius:50%;background:#64a85a;color:#fff;font-size:10px;line-height:16px;text-align:center">0</div>
<div class="abs" style="left:1073px;top:760.35px;width:121px;height:6px;border-radius:3px;background:#6cb462"></div>
<div class="abs" style="left:1131px;top:748.85px;font-size:10px;line-height:12px;color:#111">0</div>
<div class="abs" style="left:1210.2px;top:755.65px;width:8.5px;height:3.8px;background:#6cc0ff"></div>
<div class="abs" style="left:1222.1px;top:755.65px;width:8.5px;height:3.8px;background:#1010ff"></div>
<div class="abs" style="left:1233.2px;top:755.65px;width:8.5px;height:3.8px;background:#8c8cf0"></div>
<div class="abs" style="left:1245px;top:755.65px;width:8.5px;height:3.8px;background:#000"></div>
<div class="abs" style="left:1256.3px;top:755.65px;width:8.5px;height:3.8px;background:#d8348a"></div>
<div class="abs" style="left:541px;top:790px;font-size:12px;line-height:16px;color:#c4c4c4;white-space:nowrap">First</div>
<svg class="abs" style="left:591px;top:794px" width="11" height="10" viewBox="0 0 11 10"><path d="M5 1 L1.5 5 L5 9 M9.5 1 L6 5 L9.5 9" fill="none" stroke="#c4c4c4" stroke-width="1.3"/></svg>
<div class="abs" style="left:608px;top:790px;font-size:12px;line-height:16px;color:#c4c4c4;white-space:nowrap">Prev</div>
<div class="abs" style="left:648px;top:791px;width:16px;height:16px;background:#333"></div>
<div class="abs" style="left:652px;top:790px;font-size:12px;line-height:16px;color:#fff">1</div>
<div class="abs" style="left:673px;top:790px;font-size:12px;line-height:16px;color:#333">2</div>
<div class="abs" style="left:695px;top:790px;font-size:12px;line-height:16px;color:#333">3</div>
<div class="abs" style="left:722px;top:790px;font-size:12px;line-height:16px;color:#333;white-space:nowrap">Next</div>
<svg class="abs" style="left:753px;top:794px" width="11" height="10" viewBox="0 0 11 10"><path d="M1.5 1 L5 5 L1.5 9 M6 1 L9.5 5 L6 9" fill="none" stroke="#333" stroke-width="1.3"/></svg>
<div class="abs" style="left:790px;top:790px;font-size:12px;line-height:16px;color:#333;white-space:nowrap;letter-spacing:-0.6px">Last</div>
<div class="abs" style="left:525px;top:809px;width:303px;height:1px;background:#ccc"></div>
<div class="abs" style="left:654px;top:809px;font-size:12px;line-height:16px;color:#333;white-space:nowrap">Pg 1 of 3</div>
<div class="abs" style="left:1301px;top:75px;width:11px;height:747px;background:#fafafa;border-left:1px solid #e8e8e8"></div>
<div class="abs" style="left:1304.5px;top:77px;width:6.5px;height:734px;border-radius:4px;background:#c1c1c1"></div>
</div>
<!--/MAIN-->
<div id="ov"></div>
<!--MODAL-->
<div id="modal">
<div class="abs" style="left:0.00px;top:0.00px;width:987px;height:50px;background:#fafafa;border-bottom:1px solid #e6e6e6"></div>
<div class="abs" style="left:14.00px;top:15.00px;font-size:18px;line-height:22px;color:#333;white-space:nowrap;letter-spacing:-0.1px">Function details</div>
<div class="abs" style="left:14.00px;top:63.00px;font-size:12px;line-height:16px;color:#333;white-space:nowrap">Function</div>
<div class="abs" style="left:134.00px;top:63.00px;font-size:12px;line-height:16px;color:#333;white-space:nowrap;letter-spacing:-0.38px">aws/us-east-1/DVSA-ORDER-MANAGER:$LATEST</div>
<div class="abs" style="left:14.00px;top:82.00px;font-size:12px;line-height:16px;color:#333;white-space:nowrap">Description</div>
<div class="abs" style="left:14.00px;top:101.00px;font-size:12px;line-height:16px;color:#333;white-space:nowrap">Runtime</div>
<div class="abs" style="left:134.00px;top:101.00px;font-size:12px;line-height:16px;color:#333;white-space:nowrap;letter-spacing:-0.38px">nodejs12.x</div>
<div class="abs" style="left:14.00px;top:120.00px;font-size:12px;line-height:16px;color:#333;white-space:nowrap">Memory</div>
<div class="abs" style="left:134.00px;top:120.00px;font-size:12px;line-height:16px;color:#333;white-space:nowrap;letter-spacing:-0.38px">128MB</div>
<div class="abs" style="left:14.00px;top:139.00px;font-size:12px;line-height:16px;color:#333;white-space:nowrap">Timeout</div>
<div class="abs" style="left:134.00px;top:139.00px;font-size:12px;line-height:16px;color:#333;white-space:nowrap;letter-spacing:-0.38px">30sec</div>
<div class="abs" style="left:14.00px;top:180.00px;width:959px;height:32px;background:#ececec"></div>
<div class="abs" style="left:112.00px;top:180.00px;width:86px;height:32px;background:#fff;border-top:2px solid #4b97ee"></div>
<div class="abs" style="left:28.00px;top:190.00px;font-size:12px;line-height:16px;color:#666;white-space:nowrap;letter-spacing:-0.25px">Vulnerabilities</div>
<div class="abs" style="left:125.50px;top:190.00px;font-size:12px;line-height:16px;color:#333;white-space:nowrap;font-weight:bold;letter-spacing:-0.85px">Compliance</div>
<div class="abs" style="left:211.50px;top:190.00px;font-size:12px;line-height:16px;color:#666;white-space:nowrap;letter-spacing:-0.5px">Package info</div>
<div class="abs" style="left:14.00px;top:239.00px;width:649px;height:26px;border:1px solid #e6e6e6;border-radius:3px"></div>
<svg class="abs" style="left:22px;top:246px" width="12" height="12" viewBox="0 0 12 12"><path d="M0.3 0.5 L11.2 0.5 L7 5.6 L7 11.3 L4.6 9.6 L4.6 5.6 Z" fill="#b0b0b0"/></svg>
<div class="abs" style="left:40.00px;top:244.00px;font-size:12px;line-height:16px;color:#b5b5b5;white-space:nowrap;letter-spacing:-0.28px">Filter compliance by keywords and attributes</div>
<svg class="abs" style="left:644px;top:247px" width="11" height="11" viewBox="0 0 11 11"><path d="M1.5 1.5 L9.5 9.5 M9.5 1.5 L1.5 9.5" stroke="#c2c2c2" stroke-width="1.8"/></svg>
<svg class="abs" style="left:676px;top:245px" width="13" height="13" viewBox="0 0 13 13"><circle cx="6.5" cy="6.5" r="5.9" fill="#262626"/><path d="M4.6 5.2 Q4.6 3.2 6.5 3.2 Q8.4 3.2 8.4 4.9 Q8.4 5.9 7.4 6.4 Q6.6 6.8 6.6 7.9" fill="none" stroke="#fff" stroke-width="1.5"/><rect x="5.8" y="8.7" width="1.6" height="1.5" fill="#fff"/></svg>
<div class="abs" style="left:14px;top:285px;width:944px;height:311px;overflow:hidden">
<div class="abs" style="left:0.00px;top:0.00px;width:944px;height:1px;background:#e6e6e6"></div>
<div class="abs" style="left:0.00px;top:0.00px;width:1px;height:320px;background:#e8e8e8"></div>
<div class="abs" style="left:943.00px;top:0.00px;width:1px;height:320px;background:#e8e8e8"></div>
<div class="abs" style="left:8.50px;top:6.80px;font-size:12px;line-height:16px;color:#222;white-space:nowrap;font-weight:bold;letter-spacing:-0.7px">Id</div>
<div class="abs" style="left:103.00px;top:6.80px;font-size:12px;line-height:16px;color:#222;white-space:nowrap;font-weight:bold;letter-spacing:-0.72px">Category</div>
<div class="abs" style="left:197.00px;top:6.80px;font-size:12px;line-height:16px;color:#222;white-space:nowrap;font-weight:bold;letter-spacing:-0.68px">Severity</div>
<div class="abs" style="left:272.00px;top:6.80px;font-size:12px;line-height:16px;color:#222;white-space:nowrap;font-weight:bold;letter-spacing:-0.7px">Description</div>
<div class="abs" style="left:95.00px;top:0.00px;width:1px;height:174px;background:#e8e8e8"></div>
<div class="abs" style="left:95.00px;top:280.50px;width:1px;height:40px;background:#e8e8e8"></div>
<div class="abs" style="left:189.00px;top:0.00px;width:1px;height:174px;background:#e8e8e8"></div>
<div class="abs" style="left:189.00px;top:280.50px;width:1px;height:40px;background:#e8e8e8"></div>
<div class="abs" style="left:264.00px;top:0.00px;width:1px;height:174px;background:#e8e8e8"></div>
<div class="abs" style="left:264.00px;top:280.50px;width:1px;height:40px;background:#e8e8e8"></div>
<div class="abs" style="left:0.00px;top:27.00px;width:944px;height:1.5px;background:#ececec"></div>
<div class="abs" style="left:0.00px;top:56.50px;width:944px;height:1.5px;background:#ececec"></div>
<div class="abs" style="left:11.00px;top:42.75px;width:7px;height:5px"><svg width="7" height="5" viewBox="0 0 7 5" style="display:block"><path d="M0.6 0.8 L3.5 3.6 L6.4 0.8" fill="none" stroke="#666" stroke-width="1.1"/></svg></div>
<div class="abs" style="left:27.00px;top:34.75px;font-size:12px;line-height:16px;color:#333;white-space:nowrap;letter-spacing:-0.2px">446</div>
<div class="abs" style="left:103.00px;top:34.75px;font-size:12px;line-height:16px;color:#333;white-space:nowrap;letter-spacing:-0.3px">twistlock</div>
<div class="abs" style="left:196.50px;top:38.45px;width:10px;height:10px;border-radius:50%;background:#e0393a"></div>
<div class="abs" style="left:216.50px;top:34.75px;font-size:12px;line-height:16px;color:#333;white-space:nowrap;letter-spacing:-0.3px">high</div>
<div class="abs" style="left:272.00px;top:34.75px;font-size:12px;line-height:16px;color:#333;white-space:nowrap;letter-spacing:-0.34px">Unused service API with persistent access risk</div>
<div class="abs" style="left:0.00px;top:86.00px;width:944px;height:1.5px;background:#ececec"></div>
<div class="abs" style="left:11.00px;top:72.25px;width:7px;height:5px"><svg width="7" height="5" viewBox="0 0 7 5" style="display:block"><path d="M0.6 0.8 L3.5 3.6 L6.4 0.8" fill="none" stroke="#666" stroke-width="1.1"/></svg></div>
<div class="abs" style="left:27.00px;top:64.25px;font-size:12px;line-height:16px;color:#333;white-space:nowrap;letter-spacing:-0.2px">444</div>
<div class="abs" style="left:103.00px;top:64.25px;font-size:12px;line-height:16px;color:#333;white-space:nowrap;letter-spacing:-0.3px">twistlock</div>
<div class="abs" style="left:196.50px;top:67.95px;width:10px;height:10px;border-radius:50%;background:#e0393a"></div>
<div class="abs" style="left:216.50px;top:64.25px;font-size:12px;line-height:16px;color:#333;white-space:nowrap;letter-spacing:-0.3px">high</div>
<div class="abs" style="left:272.00px;top:64.25px;font-size:12px;line-height:16px;color:#333;white-space:nowrap;letter-spacing:-0.34px">Unused service API with denial of service risk</div>
<div class="abs" style="left:0.00px;top:115.50px;width:944px;height:1.5px;background:#ececec"></div>
<div class="abs" style="left:11.00px;top:101.75px;width:7px;height:5px"><svg width="7" height="5" viewBox="0 0 7 5" style="display:block"><path d="M0.6 0.8 L3.5 3.6 L6.4 0.8" fill="none" stroke="#666" stroke-width="1.1"/></svg></div>
<div class="abs" style="left:27.00px;top:93.75px;font-size:12px;line-height:16px;color:#333;white-space:nowrap;letter-spacing:-0.2px">443</div>
<div class="abs" style="left:103.00px;top:93.75px;font-size:12px;line-height:16px;color:#333;white-space:nowrap;letter-spacing:-0.3px">twistlock</div>
<div class="abs" style="left:196.50px;top:97.45px;width:10px;height:10px;border-radius:50%;background:#e0393a"></div>
<div class="abs" style="left:216.50px;top:93.75px;font-size:12px;line-height:16px;color:#333;white-space:nowrap;letter-spacing:-0.3px">high</div>
<div class="abs" style="left:272.00px;top:93.75px;font-size:12px;line-height:16px;color:#333;white-space:nowrap;letter-spacing:-0.34px">Unused service API with lateral movement risk</div>
<div class="abs" style="left:0.00px;top:144.50px;width:944px;height:1.5px;background:#ececec"></div>
<div class="abs" style="left:11.00px;top:131.00px;width:7px;height:5px"><svg width="7" height="5" viewBox="0 0 7 5" style="display:block"><path d="M0.6 0.8 L3.5 3.6 L6.4 0.8" fill="none" stroke="#666" stroke-width="1.1"/></svg></div>
<div class="abs" style="left:27.00px;top:123.00px;font-size:12px;line-height:16px;color:#333;white-space:nowrap;letter-spacing:-0.2px">442</div>
<div class="abs" style="left:103.00px;top:123.00px;font-size:12px;line-height:16px;color:#333;white-space:nowrap;letter-spacing:-0.3px">twistlock</div>
<div class="abs" style="left:196.50px;top:126.70px;width:10px;height:10px;border-radius:50%;background:#e0393a"></div>
<div class="abs" style="left:216.50px;top:123.00px;font-size:12px;line-height:16px;color:#333;white-space:nowrap;letter-spacing:-0.3px">high</div>
<div class="abs" style="left:272.00px;top:123.00px;font-size:12px;line-height:16px;color:#333;white-space:nowrap;letter-spacing:-0.34px">Unused service API with data tampering risk</div>
<div class="abs" style="left:0.50px;top:144.50px;width:943px;height:136.5px;border:1.5px solid #a9d1f7;border-bottom-width:2px"></div>
<div class="abs" style="left:2.00px;top:146.00px;width:940px;height:28px;background:#d6e6f7"></div>
<div class="abs" style="left:95.00px;top:146.00px;width:1px;height:28px;background:#c9dbee"></div>
<div class="abs" style="left:189.00px;top:146.00px;width:1px;height:28px;background:#c9dbee"></div>
<div class="abs" style="left:264.00px;top:146.00px;width:1px;height:28px;background:#c9dbee"></div>
<div class="abs" style="left:11.00px;top:160.50px;width:7px;height:5px"><svg width="7" height="5" viewBox="0 0 7 5" style="display:block"><path d="M0.6 4.2 L3.5 1.4 L6.4 4.2" fill="none" stroke="#9ccbf5" stroke-width="1.1"/></svg></div>
<div class="abs" style="left:27.00px;top:153.00px;font-size:12px;line-height:16px;color:#333;white-space:nowrap;letter-spacing:-0.2px">441</div>
<div class="abs" style="left:103.00px;top:153.00px;font-size:12px;line-height:16px;color:#333;white-space:nowrap;letter-spacing:-0.3px">twistlock</div>
<div class="abs" style="left:196.50px;top:156.50px;width:10px;height:10px;border-radius:50%;background:#e0393a"></div>
<div class="abs" style="left:216.50px;top:153.00px;font-size:12px;line-height:16px;color:#333;white-space:nowrap;letter-spacing:-0.3px">high</div>
<div class="abs" style="left:272.00px;top:153.00px;font-size:12px;line-height:16px;color:#333;white-space:nowrap;letter-spacing:-0.34px">Unused service API with data leakage risk</div>
<div class="abs" style="left:127.50px;top:208.00px;font-size:12px;line-height:16px;color:#8a8a8a;white-space:nowrap;letter-spacing:-0.3px">Full description</div>
<div class="abs" style="left:127.50px;top:236.00px;font-size:12px;line-height:16px;color:#8a8a8a;white-space:nowrap;letter-spacing:-0.3px">Cause</div>
<div class="abs" style="left:261.00px;top:208.00px;font-size:12px;line-height:16px;color:#333;white-space:nowrap;letter-spacing:-0.35px">Function has permission to an unused action which creates a risk of data leakage.</div>
<div class="abs" style="left:261.00px;top:236.00px;font-size:12px;line-height:16px;color:#333;white-space:nowrap;letter-spacing:-0.37px">Unused APIs cause risk of data leakage: lambda:GetFunction, lambda:GetFunctionConfiguration</div>
<div class="abs" style="left:0.00px;top:309.50px;width:944px;height:1.5px;background:#ececec"></div>
<div class="abs" style="left:11.00px;top:296.00px;width:7px;height:5px"><svg width="7" height="5" viewBox="0 0 7 5" style="display:block"><path d="M0.6 0.8 L3.5 3.6 L6.4 0.8" fill="none" stroke="#666" stroke-width="1.1"/></svg></div>
<div class="abs" style="left:27.00px;top:288.50px;font-size:12px;line-height:16px;color:#333;white-space:nowrap;letter-spacing:-0.2px">437</div>
<div class="abs" style="left:103.00px;top:288.50px;font-size:12px;line-height:16px;color:#333;white-space:nowrap;letter-spacing:-0.3px">twistlock</div>
<div class="abs" style="left:196.50px;top:292.00px;width:10px;height:10px;border-radius:50%;background:#e0393a"></div>
<div class="abs" style="left:216.50px;top:288.50px;font-size:12px;line-height:16px;color:#333;white-space:nowrap;letter-spacing:-0.3px">high</div>
<div class="abs" style="left:272.00px;top:288.50px;font-size:12px;line-height:16px;color:#333;white-space:nowrap;letter-spacing:-0.34px">Overly permissive service access</div>
</div>
<div class="abs" style="left:959.00px;top:285.00px;width:14px;height:311px;background:#f7f7f7;border-left:1px solid #ececec;border-right:1px solid #ececec"></div>
<div class="abs" style="left:963.00px;top:287.50px;width:7px;height:247px;border-radius:4px;background:#c1c1c1"></div>
<div class="abs" style="left:0.00px;top:610.00px;width:987px;height:1px;background:#e8e8e8"></div>
<div class="abs" style="left:923.00px;top:624.00px;width:50px;height:26px;border:1px solid #cfcfcf;border-radius:3px;background:linear-gradient(#fff,#efefef);box-shadow:0 1px 1px rgba(0,0,0,.05)"></div>
<div class="abs" style="left:933.50px;top:630.00px;font-size:12px;line-height:16px;color:#3d7cc0;white-space:nowrap;letter-spacing:-0.3px">Close</div>
</div>
<!--/MODAL-->
<!--BUBBLE-->
<svg class="abs" style="left:1240px;top:755px;z-index:20" width="72" height="67" viewBox="0 0 72 67">
 <circle cx="42.6" cy="35.9" r="22.7" fill="#3a83bb"/>
 <circle cx="20" cy="21.4" r="10.5" fill="#3a83bb"/>
 <path d="M36.9 31.6 Q37.2 26 43 26 Q48.9 26 48.9 31 Q48.9 34.4 45.6 36.4 Q43.2 38 43.2 41.2" fill="none" stroke="#fff" stroke-width="4" stroke-linecap="round"/>
 <circle cx="43.2" cy="46.4" r="2.5" fill="#fff"/>
</svg>
<div class="abs" style="left:1255px;top:770px;width:10px;font-size:12px;line-height:14px;color:#fff;text-align:center;z-index:21">6</div>
<!--/BUBBLE-->
</body></html>
